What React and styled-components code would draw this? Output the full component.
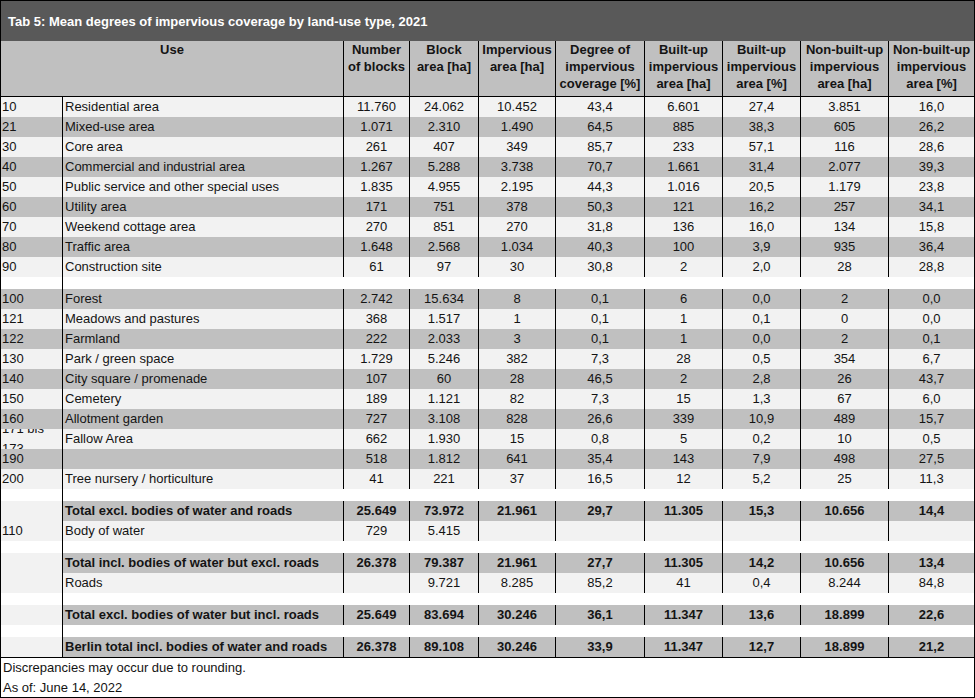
import React from 'react';
import styled, { createGlobalStyle } from 'styled-components';

const COLS = '61px 281px 66px 69px 77px 89px 78px 78px 88px 86px';

const GlobalStyle = createGlobalStyle`
  html, body {
    margin: 0;
    padding: 0;
    background: #ffffff;
  }
  body {
    font-family: "Liberation Sans", Arial, sans-serif;
    font-size: 13px;
    color: #141414;
  }
`;

const Frame = styled.div`
  width: 975px;
  height: 698px;
  box-sizing: border-box;
  border: 1px solid #000;
  display: flex;
  flex-direction: column;
  overflow: hidden;
  background: #ffffff;
`;

const Title = styled.div`
  height: 40px;
  flex: none;
  display: flex;
  align-items: center;
  padding-left: 7px;
  background: #595959;
  color: #ffffff;
  font-weight: bold;
`;

const HeadRow = styled.div`
  display: grid;
  grid-template-columns: ${COLS};
  height: 56px;
  flex: none;
  box-sizing: border-box;
  background: #c0c0c0;
  border-bottom: 1px solid #000;
`;

const HeadCell = styled.div`
  grid-column: ${(p) => (p.$span ? `span ${p.$span}` : 'auto')};
  border-left: ${(p) => (p.$first ? 'none' : '1px solid #000')};
  text-align: center;
  font-weight: bold;
  line-height: 17px;
  white-space: nowrap;
  overflow: hidden;
`;

const Row = styled.div`
  display: grid;
  grid-template-columns: ${COLS};
  height: 20px;
  flex: none;
  line-height: 20px;
  font-weight: ${(p) => (p.$bold ? 'bold' : 'normal')};
  background: ${(p) => (p.$tone === 'gray' ? '#c0c0c0' : '#f2f2f2')};
`;

const CodeCell = styled.div`
  display: flex;
  align-items: center;
  padding-left: 1px;
  overflow: hidden;
  font-weight: normal;
  background: ${(p) => (p.$tone === 'gray' ? '#c0c0c0' : '#f2f2f2')};
`;

const NameCell = styled.div`
  border-left: 1px solid #000;
  padding-left: 2px;
  white-space: nowrap;
  overflow: hidden;
`;

const NumCell = styled.div`
  border-left: 1px solid #000;
  text-align: center;
  white-space: nowrap;
  overflow: hidden;
`;

const Gap = styled.div`
  display: grid;
  grid-template-columns: ${COLS};
  height: 12px;
  flex: none;
  background: #ffffff;
`;

const GapCell = styled.div`
  border-left: ${(p) => (p.$line ? '1px solid #000' : '1px solid transparent')};
`;

const Footer = styled.div`
  border-top: 1px solid #000;
  padding-left: 2px;
  line-height: 19.5px;
  flex: none;
`;

const groupA = [
  ['10', 'Residential area', '11.760', '24.062', '10.452', '43,4', '6.601', '27,4', '3.851', '16,0'],
  ['21', 'Mixed-use area', '1.071', '2.310', '1.490', '64,5', '885', '38,3', '605', '26,2'],
  ['30', 'Core area', '261', '407', '349', '85,7', '233', '57,1', '116', '28,6'],
  ['40', 'Commercial and industrial area', '1.267', '5.288', '3.738', '70,7', '1.661', '31,4', '2.077', '39,3'],
  ['50', 'Public service and other special uses', '1.835', '4.955', '2.195', '44,3', '1.016', '20,5', '1.179', '23,8'],
  ['60', 'Utility area', '171', '751', '378', '50,3', '121', '16,2', '257', '34,1'],
  ['70', 'Weekend cottage area', '270', '851', '270', '31,8', '136', '16,0', '134', '15,8'],
  ['80', 'Traffic area', '1.648', '2.568', '1.034', '40,3', '100', '3,9', '935', '36,4'],
  ['90', 'Construction site', '61', '97', '30', '30,8', '2', '2,0', '28', '28,8'],
];

const groupB = [
  ['100', 'Forest', '2.742', '15.634', '8', '0,1', '6', '0,0', '2', '0,0'],
  ['121', 'Meadows and pastures', '368', '1.517', '1', '0,1', '1', '0,1', '0', '0,0'],
  ['122', 'Farmland', '222', '2.033', '3', '0,1', '1', '0,0', '2', '0,1'],
  ['130', 'Park / green space', '1.729', '5.246', '382', '7,3', '28', '0,5', '354', '6,7'],
  ['140', 'City square / promenade', '107', '60', '28', '46,5', '2', '2,8', '26', '43,7'],
  ['150', 'Cemetery', '189', '1.121', '82', '7,3', '15', '1,3', '67', '6,0'],
  ['160', 'Allotment garden', '727', '3.108', '828', '26,6', '339', '10,9', '489', '15,7'],
  ['171 bis 173', 'Fallow Area', '662', '1.930', '15', '0,8', '5', '0,2', '10', '0,5'],
  ['190', '', '518', '1.812', '641', '35,4', '143', '7,9', '498', '27,5'],
  ['200', 'Tree nursery / horticulture', '41', '221', '37', '16,5', '12', '5,2', '25', '11,3'],
];

const DataRow = ({ cells, tone, codeTone, bold }) => {
  const [code, name, ...nums] = cells;
  return (
    <Row $tone={tone} $bold={bold}>
      <CodeCell $tone={codeTone || tone}>{code}</CodeCell>
      <NameCell>{name}</NameCell>
      {nums.map((n, i) => (
        <NumCell key={i}>{n}</NumCell>
      ))}
    </Row>
  );
};

const Spacer = ({ lines = [1] }) => (
  <Gap>
    {Array.from({ length: 10 }).map((_, i) => (
      <GapCell key={i} $line={lines.includes(i)} />
    ))}
  </Gap>
);

const headers = [
  ['Number', 'of blocks'],
  ['Block', 'area [ha]'],
  ['Impervious', 'area [ha]'],
  ['Degree of', 'impervious', 'coverage [%]'],
  ['Built-up', 'impervious', 'area [ha]'],
  ['Built-up', 'impervious', 'area [%]'],
  ['Non-built-up', 'impervious', 'area [ha]'],
  ['Non-built-up', 'impervious', 'area [%]'],
];

const App = () => {
  return (
    <React.Fragment>
      <GlobalStyle />
      <Frame>
        <Title>Tab 5: Mean degrees of impervious coverage by land-use type, 2021</Title>
        <HeadRow>
          <HeadCell $span={2} $first>Use</HeadCell>
          {headers.map((lines, i) => (
            <HeadCell key={i}>
              {lines.map((l, j) => (
                <div key={j}>{l}</div>
              ))}
            </HeadCell>
          ))}
        </HeadRow>

        {groupA.map((r, i) => (
          <DataRow key={r[0]} cells={r} tone={i % 2 ? 'gray' : 'light'} />
        ))}
        <Spacer />
        {groupB.map((r, i) => (
          <DataRow key={r[0]} cells={r} tone={i % 2 ? 'light' : 'gray'} />
        ))}
        <Spacer />
        <DataRow
          bold
          tone="gray"
          codeTone="light"
          cells={['', 'Total excl. bodies of water and roads', '25.649', '73.972', '21.961', '29,7', '11.305', '15,3', '10.656', '14,4']}
        />
        <DataRow tone="light" cells={['110', 'Body of water', '729', '5.415', '', '', '', '', '', '']} />
        <Spacer lines={[1, 7]} />
        <DataRow
          bold
          tone="gray"
          codeTone="light"
          cells={['', 'Total incl. bodies of water but excl. roads', '26.378', '79.387', '21.961', '27,7', '11.305', '14,2', '10.656', '13,4']}
        />
        <DataRow tone="light" cells={['', 'Roads', '', '9.721', '8.285', '85,2', '41', '0,4', '8.244', '84,8']} />
        <Spacer />
        <DataRow
          bold
          tone="gray"
          codeTone="light"
          cells={['', 'Total excl. bodies of water but incl. roads', '25.649', '83.694', '30.246', '36,1', '11.347', '13,6', '18.899', '22,6']}
        />
        <Spacer />
        <DataRow
          bold
          tone="gray"
          codeTone="light"
          cells={['', 'Berlin total incl. bodies of water and roads', '26.378', '89.108', '30.246', '33,9', '11.347', '12,7', '18.899', '21,2']}
        />
        <Footer>
          <div>Discrepancies may occur due to rounding.</div>
          <div>As of: June 14, 2022</div>
        </Footer>
      </Frame>
    </React.Fragment>
  );
};

export default App;
